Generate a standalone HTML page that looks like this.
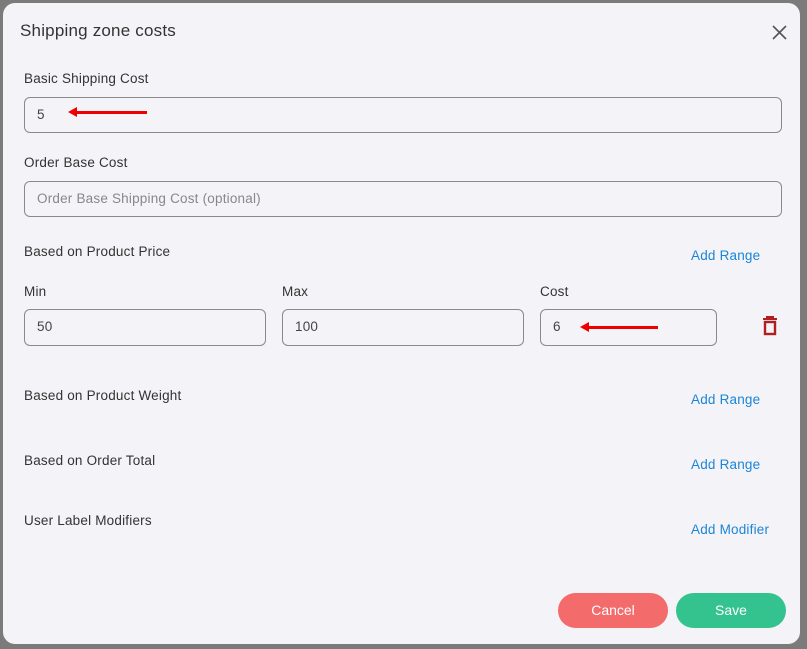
<html><head><style>
body{margin:0;width:807px;height:649px;background:#7b7b7b;font-family:"Liberation Sans",sans-serif;position:relative;overflow:hidden}
.m{position:absolute;left:3px;top:3px;width:797px;height:641px;background:#f4f3f7;border-radius:12px}
.t{position:absolute;font-size:13.5px;color:#333;letter-spacing:0.2px}
.i{position:absolute;border:1px solid #8a8a8a;border-radius:6px;height:34px;box-sizing:border-box;font-size:13.5px;color:#444;padding:9px 12px;letter-spacing:0.2px}
.a{position:absolute;color:#1a86d8;font-size:13.5px;letter-spacing:0.2px}
.b{position:absolute;top:593px;height:35px;border-radius:18px;color:#fff;font-size:14px;text-align:center;line-height:35px}
.ar{position:absolute;height:3px;background:#e00}
.ar:before{content:"";position:absolute;left:-8px;top:-4px;border:5.5px solid transparent;border-right:9px solid #e00;border-left:0}
</style></head><body>
<div class="m"></div>
<div class="t" style="left:20px;top:21px;font-size:17px;color:#333">Shipping zone costs</div>
<svg style="position:absolute;left:772px;top:25px" width="15" height="15"><path d="M1 1L14 14M14 1L1 14" stroke="#555" stroke-width="1.6"/></svg>
<div class="t" style="left:24px;top:71px">Basic Shipping Cost</div>
<div class="i" style="left:24px;top:97px;width:758px;height:36px">5</div>
<div class="ar" style="left:76px;top:111px;width:71px"></div>
<div class="t" style="left:24px;top:155px">Order Base Cost</div>
<div class="i" style="left:24px;top:181px;width:758px;height:36px;color:#888">Order Base Shipping Cost (optional)</div>
<div class="t" style="left:24px;top:244px">Based on Product Price</div>
<div class="a" style="left:691px;top:248px">Add Range</div>
<div class="t" style="left:24px;top:284px">Min</div>
<div class="t" style="left:282px;top:284px">Max</div>
<div class="t" style="left:540px;top:284px">Cost</div>
<div class="i" style="left:24px;top:309px;width:242px;height:37px">50</div>
<div class="i" style="left:282px;top:309px;width:242px;height:37px">100</div>
<div class="i" style="left:540px;top:309px;width:177px;height:37px">6</div>
<div class="ar" style="left:588px;top:326px;width:70px"></div>
<svg style="position:absolute;left:762px;top:316px" width="16" height="20"><path d="M1 3H15M5 3V1H11V3" stroke="#b02020" stroke-width="2" fill="none"/><rect x="3" y="6" width="10" height="12" fill="none" stroke="#b02020" stroke-width="2.4"/></svg>
<div class="t" style="left:24px;top:388px">Based on Product Weight</div>
<div class="a" style="left:691px;top:392px">Add Range</div>
<div class="t" style="left:24px;top:453px">Based on Order Total</div>
<div class="a" style="left:691px;top:457px">Add Range</div>
<div class="t" style="left:24px;top:513px">User Label Modifiers</div>
<div class="a" style="left:691px;top:522px">Add Modifier</div>
<div class="b" style="left:558px;width:110px;background:#f36b6b">Cancel</div>
<div class="b" style="left:676px;width:110px;background:#34c38f">Save</div>
</body></html>
